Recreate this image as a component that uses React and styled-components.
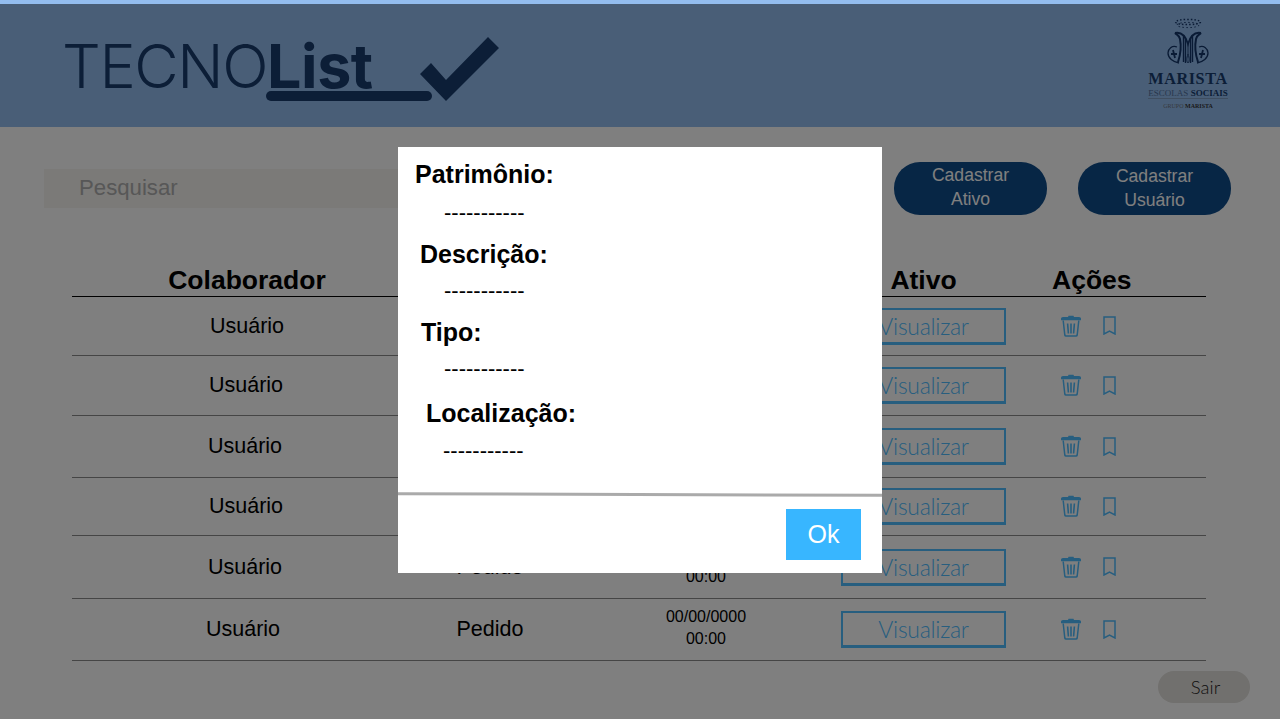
import styled, { createGlobalStyle } from "styled-components";

const GlobalStyle = createGlobalStyle`
  html, body {
    margin: 0;
    background: #fff;
    font-family: "Liberation Sans", Arial, sans-serif;
  }
`;

const Screen = styled.div`
  position: relative;
  width: 1280px;
  height: 720px;
  overflow: hidden;
  background: #fff;
`;

const Header = styled.header`
  height: 127px;
  background: #93bdef;
  display: flex;
  align-items: flex-start;
  justify-content: space-between;
  padding: 0 52px 0 62px;
  box-sizing: border-box;
`;

const Brand = styled.div`
  display: flex;
  align-items: flex-start;
  padding-top: 37px;
  color: #183c6e;
`;

const Wordmark = styled.div`
  position: relative;
  width: 358px;
  font-family: Inter, sans-serif;
  font-size: 61px;
  line-height: 58px;
  font-weight: 350;
  letter-spacing: -1.4px;
  white-space: nowrap;

  b {
    font-weight: 700;
    letter-spacing: -0.5px;
  }
`;

const Underline = styled.span`
  position: absolute;
  left: 204px;
  top: 54px;
  width: 166px;
  height: 10px;
  border-radius: 5px;
  background: #183c6e;
`;

const Partner = styled.div`
  width: 80px;
  padding-top: 18px;
  display: flex;
  flex-direction: column;
  align-items: center;
  color: #183c6e;
  font-family: "Liberation Serif", serif;
  white-space: nowrap;
`;

const PartnerName = styled.div`
  font-size: 16.2px;
  line-height: 14px;
  font-weight: 700;
  letter-spacing: 0.6px;
  margin: 8px 0 2px;
`;

const PartnerLine = styled.div`
  font-size: 9px;
  line-height: 10px;
  border-bottom: 1px solid #7f9cc0;
  color: #4f6f9c;

  b {
    font-weight: 700;
    color: #183c6e;
  }
`;

const PartnerGroup = styled.div`
  font-size: 6px;
  line-height: 9px;
  margin-top: 3px;
  color: #6c7480;

  b {
    color: #333;
  }
`;

const Toolbar = styled.div`
  height: 134px;
  box-sizing: border-box;
  padding: 35px 49px 0 44px;
  display: flex;
  align-items: flex-start;
`;

const Search = styled.div`
  width: 800px;
  height: 39px;
  margin: 7px 50px 0 0;
  padding-left: 35px;
  box-sizing: border-box;
  background: #f6f4f0;
  color: #aeaeae;
  font-size: 22.2px;
  line-height: 38px;
`;

const PillButton = styled.button`
  width: 153px;
  height: 53px;
  margin-left: ${(p) => p.$gap || 0}px;
  padding: 0 0 ${(p) => p.$lift}px;
  border: 0;
  border-radius: 26px;
  background: #0f4c8a;
  color: #fff;
  font-family: "Liberation Sans", Arial, sans-serif;
  font-size: 17.6px;
  line-height: 24px;
`;

const Table = styled.div`
  width: 1134px;
  margin-left: 72px;
`;

const Columns = styled.div`
  display: grid;
  grid-template-columns: 336px 164px 268px 167px 1fr;
  align-items: center;
`;

const HeadRow = styled(Columns)`
  height: 35px;
  border-bottom: 1px solid #000;
  font-size: 26.5px;
  font-weight: 700;
  color: #000;
  text-align: center;
`;

const HeadCell = styled.div`
  padding-left: ${(p) => p.$left || 0}px;
  padding-top: 3px;
  text-align: ${(p) => (p.$left > 20 ? "left" : "center")};
`;

const Row = styled(Columns)`
  height: ${(p) => p.$h}px;
  box-sizing: border-box;
  border-bottom: 1px solid #8a8a8a;
  font-size: 21.5px;
  color: #000;
  text-align: center;
`;

const NameCell = styled.div`
  padding-left: ${(p) => p.$left}px;
`;

const DateCell = styled.div`
  padding-bottom: 3px;
  font-size: 16px;
  line-height: 22px;
`;

const ViewButton = styled.button`
  width: 165px;
  height: 37px;
  margin-left: 1px;
  padding: 0;
  background: transparent;
  border: 2px solid #4fbcff;
  border-bottom-width: 3px;
  color: #4fbcff;
  font-family: Lato, sans-serif;
  font-weight: 300;
  font-size: 23px;
  letter-spacing: -0.3px;
`;

const Actions = styled.div`
  display: flex;
  align-items: center;
  gap: 22px;
  padding: 0 0 1px 54px;
  color: #4fbcff;
`;

const Footer = styled.div`
  display: flex;
  justify-content: flex-end;
  padding: 10px 30px 0 0;
`;

const ExitButton = styled.button`
  width: 92px;
  height: 32px;
  padding: 0 0 0 3px;
  border: 0;
  border-radius: 16px;
  background: #e2e0dc;
  color: #222;
  font-family: Lato, sans-serif;
  font-weight: 300;
  font-size: 18.5px;
`;

const Overlay = styled.div`
  position: absolute;
  inset: 4px 0 1px 0;
  background: rgba(0, 0, 0, 0.5);
  padding: 143px 0 0 398px;
  box-sizing: border-box;
`;

const Modal = styled.div`
  width: 484px;
  height: 426px;
  background: #fff;
  display: flex;
  flex-direction: column;
`;

const ModalBody = styled.div`
  height: 346px;
  box-sizing: border-box;
  padding-top: 13px;
`;

const FieldLabel = styled.div`
  margin: ${(p) => p.$top}px 0 0 ${(p) => p.$x}px;
  font-size: 25px;
  line-height: 28px;
  font-weight: 700;
  color: #000;
`;

const FieldValue = styled.div`
  margin: ${(p) => p.$top}px 0 0 ${(p) => p.$x}px;
  font-size: 22px;
  line-height: 24px;
  color: #000;
`;

const Divider = styled.div`
  height: 3px;
  background: #aaa;
  transform: rotate(0.2deg);
`;

const ModalFooter = styled.div`
  display: flex;
  justify-content: flex-end;
  padding: 13px 21px 0 0;
`;

const OkButton = styled.button`
  width: 75px;
  height: 51px;
  padding: 0;
  border: 0;
  background: #38b6ff;
  color: #fff;
  font-family: "Liberation Sans", Arial, sans-serif;
  font-size: 25px;
`;

const CheckMark = () => (
  <svg width="80" height="65" viewBox="0 0 80 65" fill="#183c6e">
    <path d="M79 11 L68 0 L26 43 L11 26 L0 37 L26 64 Z" />
  </svg>
);

const MaristaCrest = () => (
  <svg width="46" height="46" viewBox="0 0 46 46" fill="none" stroke="#14366a" strokeWidth="1.4">
    <ellipse cx="23" cy="4" rx="12.5" ry="2.6" strokeDasharray="1.5 2" strokeWidth="1.5" />
    <ellipse cx="23" cy="7" rx="11" ry="2.6" strokeDasharray="1.5 2.4" strokeWidth="1" />
    <path d="M10 15 C12 17 14 17 15 21 C16 26 16 35 13 44 M36 15 C34 17 32 17 31 21 C30 26 30 35 33 44" strokeWidth="2" />
    <path d="M10 15 C15 14 20 16 23 26 C26 16 31 14 36 15" strokeWidth="1.8" />
    <path d="M18.5 17 V44 M20.5 20 V45 M25.5 20 V45 M27.5 17 V44" />
    <path d="M23 26 V36 M23 36 C21.5 40 21.5 44 23 45 C24.5 44 24.5 40 23 36" strokeWidth="1" />
    <path d="M12 29 C7 27 3 31 3 35 C3 40 8 44 14 45 M34 29 C39 27 43 31 43 35 C43 40 38 44 32 45" strokeWidth="1.3" />
    <path d="M8 32 L10 40 M6 36 L12 36 M38 32 L36 40 M40 36 L34 36" strokeWidth="1.8" />
  </svg>
);

const TrashIcon = () => (
  <svg width="20" height="22" viewBox="0 0 20 22" fill="none" stroke="currentColor">
    <path d="M0 3.5 Q0 2 2 2 H7 L7.5 0.7 H12.5 L13 2 H18 Q20 2 20 3.5 V5.3 H0 Z" fill="currentColor" stroke="none" />
    <path d="M2.2 5.5 L3.8 20 Q4 21 5 21 H15 Q16 21 16.2 20 L17.8 5.5" strokeWidth="1.5" />
    <path d="M6.6 8.5 L7.4 18.5 M10 8.5 V18.5 M13.4 8.5 L12.6 18.5" strokeWidth="1.6" />
  </svg>
);

const BookmarkIcon = () => (
  <svg width="13" height="19" viewBox="0 0 13 19" fill="none" stroke="currentColor" strokeWidth="1.5">
    <path d="M1 1 H12 V18 L6.5 15 L1 18 Z" />
  </svg>
);

// the modal hides the type of the first four rows
const rows = [
  { h: 59, left: 14 },
  { h: 60, left: 12 },
  { h: 62, left: 10 },
  { h: 58, left: 12 },
  { h: 63, left: 10, type: "Pedido" },
  { h: 62, left: 6, type: "Pedido" },
];

export default function App() {
  return (
    <Screen>
      <GlobalStyle />
      <Header>
        <Brand>
          <Wordmark>
            TECNO<b>List</b>
            <Underline />
          </Wordmark>
          <CheckMark />
        </Brand>
        <Partner>
          <MaristaCrest />
          <PartnerName>MARISTA</PartnerName>
          <PartnerLine>
            ESCOLAS <b>SOCIAIS</b>
          </PartnerLine>
          <PartnerGroup>
            GRUPO <b>MARISTA</b>
          </PartnerGroup>
        </Partner>
      </Header>

      <Toolbar>
        <Search>Pesquisar</Search>
        <PillButton $lift={3}>
          Cadastrar
          <br />
          Ativo
        </PillButton>
        <PillButton $gap={31} $lift={1}>
          Cadastrar
          <br />
          Usuário
        </PillButton>
      </Toolbar>

      <Table>
        <HeadRow>
          <HeadCell $left={14}>Colaborador</HeadCell>
          <HeadCell />
          <HeadCell />
          <HeadCell>Ativo</HeadCell>
          <HeadCell $left={45}>Ações</HeadCell>
        </HeadRow>
        {rows.map((row, i) => (
          <Row key={i} $h={row.h}>
            <NameCell $left={row.left}>Usuário</NameCell>
            <div>{row.type}</div>
            <DateCell>
              00/00/0000
              <br />
              00:00
            </DateCell>
            <ViewButton>Visualizar</ViewButton>
            <Actions>
              <TrashIcon />
              <BookmarkIcon />
            </Actions>
          </Row>
        ))}
      </Table>

      <Footer>
        <ExitButton>Sair</ExitButton>
      </Footer>

      <Overlay>
        <Modal>
          <ModalBody>
            <FieldLabel $top={0} $x={17}>Patrimônio:</FieldLabel>
            <FieldValue $top={13} $x={46}>-----------</FieldValue>
            <FieldLabel $top={15} $x={22}>Descrição:</FieldLabel>
            <FieldValue $top={11} $x={46}>-----------</FieldValue>
            <FieldLabel $top={15} $x={23}>Tipo:</FieldLabel>
            <FieldValue $top={11} $x={46}>-----------</FieldValue>
            <FieldLabel $top={18} $x={28}>Localização:</FieldLabel>
            <FieldValue $top={12} $x={45}>-----------</FieldValue>
          </ModalBody>
          <Divider />
          <ModalFooter>
            <OkButton>Ok</OkButton>
          </ModalFooter>
        </Modal>
      </Overlay>
    </Screen>
  );
}
